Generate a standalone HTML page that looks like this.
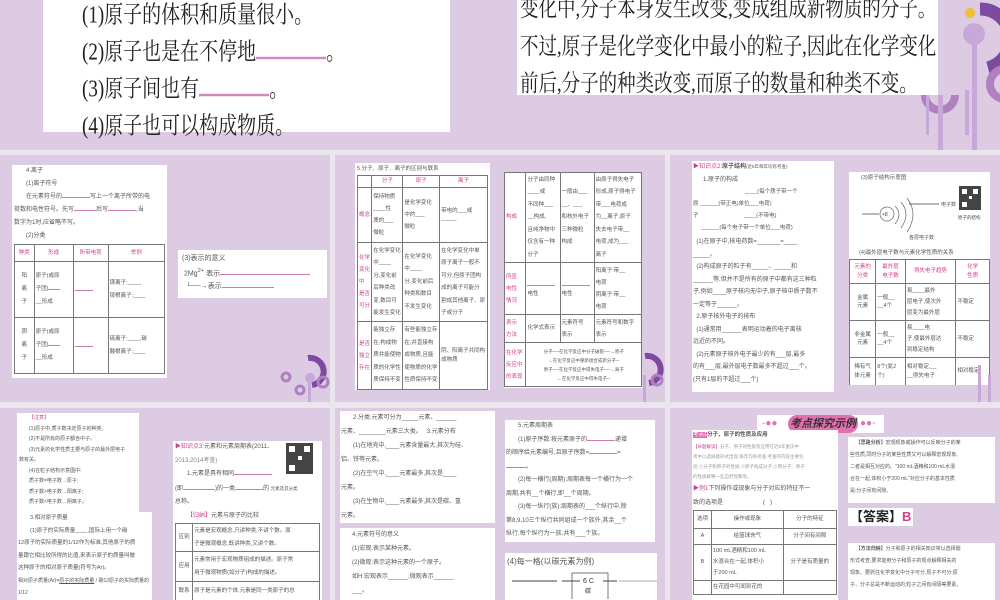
<!DOCTYPE html>
<html><head><meta charset="utf-8">
<style>
*{margin:0;padding:0;box-sizing:border-box}
body{width:1000px;height:600px;overflow:hidden;background:#ebe6ee;position:relative;font-family:"Liberation Sans","Noto Sans CJK SC",sans-serif;color:#333}
.s{position:absolute;background:#ddcbe3}
.p{position:absolute;background:#fff;overflow:hidden;font-size:6.5px;line-height:12px;color:#555;padding:2px 4px}
.big{position:absolute;font-family:"Liberation Serif","Noto Serif CJK SC",serif;font-size:19px;color:#222;white-space:nowrap;transform:scaleY(1.25);transform-origin:0 0}
.u{display:inline-block;border-bottom:1px solid #c77bb0;height:7px;vertical-align:baseline}
.bu{display:inline-block;border-bottom:2px solid #d08ac0;width:70px;height:18px}
table{border-collapse:collapse;width:100%}
td{border:1px solid #777;font-size:5.5px;line-height:8.5px;padding:0 1px;vertical-align:middle;color:#555}
.pk{color:#d0408f}
.deco{position:absolute}
</style></head><body>
<!-- top slide -->
<div class="s" style="left:0;top:0;width:1000px;height:150px"></div>
<div class="p" style="left:43px;top:0;width:407px;height:132px;padding:0"></div>
<div class="big" style="left:82px;top:-4px">(1)原子的体积和质量很小。</div>
<div class="big" style="left:82px;top:33px">(2)原子也是在不停地<span class="bu"></span>。</div>
<div class="big" style="left:82px;top:70px">(3)原子间也有<span class="bu"></span>。</div>
<div class="big" style="left:82px;top:107px">(4)原子也可以构成物质。</div>
<div class="p" style="left:517px;top:0;width:421px;height:95px;padding:0"></div>
<div class="big" style="left:520px;top:-9px;font-size:18.5px">变化中,分子本身发生改变,变成组成新物质的分子。</div>
<div class="big" style="left:520px;top:29px;font-size:18.5px">不过,原子是化学变化中最小的粒子,因此在化学变化</div>
<div class="big" style="left:520px;top:66px;font-size:18.5px">前后,分子的种类改变,而原子的数量和种类不变。</div>
<svg class="deco" style="left:860px;top:0" width="140" height="150">
<circle cx="110" cy="13" r="5" fill="#f0c030"/>
<path d="M120 9 A30 30 0 0 1 128 68" stroke="#7e4aa0" stroke-width="13" fill="none"/>
<circle cx="114" cy="34" r="11" fill="#c8a8d8"/>
<rect x="112" y="34" width="5" height="116" fill="#c8a8d8"/>
<rect x="105" y="90" width="4" height="45" fill="#c8a8d8"/>
<circle cx="145" cy="84" r="15" stroke="#b080c0" stroke-width="8" fill="none"/>
<rect x="142" y="84" width="4" height="56" fill="#c8a8d8"/>
<path d="M65 95 A15 15 0 0 0 95 95" stroke="#b080c0" stroke-width="8" fill="none"/>
<rect x="78" y="95" width="5" height="55" fill="#c8a8d8"/>
<rect x="66" y="95" width="3" height="40" fill="#c8a8d8"/>
</svg>

<!-- Row 2 -->
<div class="s" style="left:0;top:155px;width:330px;height:247px"></div>
<div class="s" style="left:335px;top:155px;width:330px;height:247px"></div>
<div class="s" style="left:670px;top:155px;width:330px;height:247px"></div>

<div class="p" style="left:12px;top:165px;width:155px;height:213px;padding:0 2px;font-size:6px;line-height:13px">
<div style="padding-left:12px">4.离子</div>
<div style="padding-left:12px">(1)离子符号</div>
<div style="padding-left:12px">在元素符号的<span class="u" style="width:28px"></span>写上一个离子所带的电</div>
<div>荷数和电性符号。先写<span class="u" style="width:22px"></span>后写<span class="u" style="width:28px"></span>,当</div>
<div>数字为1时,应省略不写。</div>
<div style="padding-left:12px">(2)分类</div>
<table style="margin-top:1px"><tr style="height:17px"><td class="pk" style="text-align:center">种类</td><td class="pk" style="text-align:center">形成</td><td class="pk" style="text-align:center">所带电荷</td><td class="pk" style="text-align:center">举例</td></tr>
<tr style="height:56px"><td style="line-height:13px;text-align:center">阳<br>离<br>子</td><td style="line-height:13px">原子(或原<br>子团)<span class="u" style="width:12px"></span><br>__形成</td><td><span class="u" style="width:18px"></span></td><td style="line-height:13px">镁离子:____,<br>铵根离子:____</td></tr>
<tr style="height:56px"><td style="line-height:13px;text-align:center">阴<br>离<br>子</td><td style="line-height:13px">原子(或原<br>子团)<span class="u" style="width:12px"></span><br>__形成</td><td><span class="u" style="width:18px"></span></td><td style="line-height:13px">硫离子:____,碳<br>酸根离子:____</td></tr></table>
</div>
<div class="p" style="left:178px;top:250px;width:149px;height:48px;font-size:7px;line-height:13px">(3)表示的意义<br>&nbsp;2Mg<sup>2+</sup> 表示<span class="u" style="width:90px"></span><br>&nbsp;&nbsp;└──→表示<span class="u" style="width:52px"></span></div>
<svg class="deco" style="left:278px;top:350px" width="52" height="52"><path d="M30 8 A12 12 0 0 1 34 35" stroke="#7e4aa0" stroke-width="6" fill="none"/><circle cx="32" cy="28" r="5" fill="#c8a8d8"/><rect x="30" y="28" width="3" height="24" fill="#c8a8d8"/><circle cx="45" cy="32" r="5" stroke="#b080c0" stroke-width="3" fill="none"/><circle cx="22" cy="40" r="4" stroke="#b080c0" stroke-width="3" fill="none"/><circle cx="8" cy="27" r="4" stroke="#b080c0" stroke-width="3" fill="none"/></svg>

<div class="p" style="left:355px;top:163px;width:135px;height:227px;padding:0 2px">
<div style="font-size:5.5px;line-height:12px">5.分子、原子、离子的区别与联系</div>
<table><tr style="height:12px"><td></td><td class="pk" style="text-align:center">分子</td><td class="pk" style="text-align:center">原子</td><td class="pk" style="text-align:center">离子</td></tr>
<tr style="height:55px"><td class="pk">概念</td><td style="line-height:12px">保持物质<br>____性<br>质的___<br>微粒</td><td style="line-height:12px">是化学变化<br>中的___<br>微粒</td><td>带电的___或<br>_____</td></tr>
<tr style="height:79px"><td class="pk" style="line-height:12px">化学<br>变化<br>中<br>是否<br>可分</td><td style="line-height:12.5px">在化学变化<br>中____<br>分,变化前<br>后种类改<br>变,数目可<br>能发生变化</td><td style="line-height:12.5px">在化学变化<br>中____<br>分,变化前后<br>种类和数目<br>不发生变化</td><td style="line-height:12.5px">在化学变化中单<br>原子离子一般不<br>可分,但原子团构<br>成的离子可能分<br>割成其他离子、原<br>子或分子</td></tr>
<tr style="height:68px"><td class="pk" style="line-height:12px">是否<br>独立<br>存在</td><td style="line-height:12.5px">能独立存<br>在,构成物<br>质并能使物<br>质的化学性<br>质保持不变</td><td style="line-height:12.5px">有些能独立存<br>在,并直接构<br>成物质,且能<br>使物质的化学<br>性质保持不变</td><td>阴、阳离子共同构<br>成物质</td></tr></table></div>
<div class="p" style="left:504px;top:172px;width:138px;height:216px;padding:0">
<table><tr style="height:90px"><td class="pk">构成</td><td style="line-height:12.5px">分子由同种<br>____或<br>不同种___<br>__构成,<br>且纯净物中<br>仅含有一种<br>分子</td><td style="line-height:12.5px">一般由___<br>__、___<br>和核外电子<br>三种微粒<br>构成</td><td style="line-height:12.5px">由原子得失电子<br>形成,原子得电子<br>带___电荷成<br>为__离子,原子<br>失去电子带__<br>电荷,成为___<br>离子</td></tr>
<tr style="height:52px"><td class="pk" style="line-height:12px">所显<br>电性<br>情况</td><td><span class="u" style="width:28px"></span><br>电性</td><td><span class="u" style="width:28px"></span><br>电性</td><td style="line-height:12px">阳离子:带__<br>电荷<br>阴离子:带__<br>电荷</td></tr>
<tr style="height:28px"><td class="pk" style="line-height:12px">表示<br>方法</td><td>化学式表示</td><td style="line-height:12px">元素符号<br>表示</td><td style="line-height:12px">元素符号和数字<br>表示</td></tr>
<tr style="height:44px"><td class="pk" style="line-height:12px">在化学<br>反应中<br>的表现</td><td colspan="3" style="font-size:4.5px;line-height:9px;text-align:center">分子──在化学反应中分子破裂──→原子<br>←在化学反应中重新组合成新分子─<br>原子──在化学反应中得失电子──→离子<br>←在化学反应中得失电子─</td></tr></table></div>

<div class="p" style="left:692px;top:161px;width:142px;height:231px;padding:0 1px;font-size:6px;line-height:12.5px">
<div><span class="pk">▶知识点2:</span><b>原子结构</b><span style="font-size:4.5px">(近5年每年均有考查)</span></div>
<div style="padding-left:10px">1.原子的构成</div>
<div style="height:50px;font-size:5.5px;line-height:12px;position:relative">
<div style="position:absolute;left:52px;top:0">____(每个质子带一个</div>
<div style="position:absolute;left:0;top:12px">原 ______(带正电)单位___电荷)</div>
<div style="position:absolute;left:0;top:24px">子 <span style="padding-left:44px">____(不带电)</span></div>
<div style="position:absolute;left:8px;top:36px">______(每个电子带一个单位___电荷)</div></div>
<div>&nbsp;&nbsp;(1)在原子中,核电荷数=_______=____</div>
<div>_____。</div>
<div>&nbsp;&nbsp;(2)构成原子的粒子有_____、_____和</div>
<div>______等,但并不是所有的原子中都有这三种粒</div>
<div>子,例如____原子核内无中子,原子核中质子数不</div>
<div>一定等于______。</div>
<div>&nbsp;&nbsp;2.原子核外电子的排布</div>
<div>&nbsp;&nbsp;(1)通常用______表明运动着的电子离核</div>
<div>远近的不同。</div>
<div>&nbsp;&nbsp;(2)元素原子核外电子最少的有___层,最多</div>
<div>的有___层,最外层电子数最多不超过___个。</div>
<div>(只有1层的不超过___个)</div></div>
<div class="p" style="left:849px;top:172px;width:141px;height:213px;padding:0">
<div style="padding-left:12px;font-size:5.5px">(3)原子结构示意图</div>
<svg width="141" height="58"><circle cx="38" cy="30" r="7" fill="none" stroke="#666" stroke-width="0.7"/><text x="33" y="32" font-size="5" fill="#444">+8</text><path d="M46 22 Q54 30 46 40 M52 18 Q62 30 52 44 M58 14 Q70 30 58 48" stroke="#666" fill="none" stroke-width="0.7"/><line x1="13" y1="30" x2="30" y2="30" stroke="#444" stroke-width="0.7"/><line x1="60" y1="20" x2="90" y2="20" stroke="#444" stroke-width="0.7"/><text x="92" y="22" font-size="5" fill="#555">电子数</text><text x="60" y="55" font-size="5" fill="#555">各层电子数</text><rect x="110" y="2" width="22" height="24" fill="#444"/><rect x="113" y="5" width="5" height="5" fill="#fff"/><rect x="124" y="5" width="5" height="5" fill="#fff"/><rect x="113" y="18" width="5" height="5" fill="#fff"/><rect x="120" y="12" width="3" height="3" fill="#fff"/><text x="109" y="35" font-size="4.5" fill="#444">原子的结构</text></svg>
<div style="padding-left:10px;font-size:5.5px">(4)最外层电子数与元素化学性质的关系</div>
<table><tr style="height:24px"><td class="pk" style="text-align:center">元素的<br>分类</td><td class="pk" style="text-align:center">最外层<br>电子数</td><td class="pk" style="text-align:center">得失电子趋势</td><td class="pk" style="text-align:center">化学<br>性质</td></tr>
<tr style="height:37px"><td style="text-align:center">金属<br>元素</td><td>一般__<br>__4个</td><td style="line-height:11px">易____最外<br>层电子,使次外<br>层变为最外层</td><td>不稳定</td></tr>
<tr style="height:37px"><td style="text-align:center">非金属<br>元素</td><td>一般__<br>__4个</td><td style="line-height:11px">易____电<br>子,使最外层达<br>到稳定结构</td><td>不稳定</td></tr>
<tr style="height:28px"><td style="text-align:center">稀有气<br>体元素</td><td>8个(氦2<br>个)</td><td>相对稳定,__<br>__得失电子</td><td>相对稳定</td></tr></table></div>
<svg class="deco" style="left:635px;top:350px" width="30" height="52"><path d="M10 6 A12 12 0 0 1 14 33" stroke="#7e4aa0" stroke-width="6" fill="none"/><rect x="8" y="25" width="3" height="27" fill="#c8a8d8"/><circle cx="22" cy="30" r="5" stroke="#b080c0" stroke-width="3" fill="none"/></svg>
<svg class="deco" style="left:960px;top:360px" width="40" height="42"><rect x="18" y="5" width="3" height="37" fill="#c8a8d8"/><rect x="28" y="15" width="3" height="27" fill="#c8a8d8"/></svg>

<!-- Row 3 -->
<div class="s" style="left:0;top:408px;width:330px;height:192px"></div>
<div class="s" style="left:335px;top:408px;width:330px;height:192px"></div>
<div class="s" style="left:670px;top:408px;width:330px;height:192px"></div>

<div class="p" style="left:17px;top:413px;width:122px;height:104px;font-size:5px;line-height:10.5px;padding:0 0 0 2px">
<div class="pk" style="padding-left:10px">【注意】</div>
<div style="padding-left:10px">(1)原子中,质子数决定原子的种类。</div>
<div style="padding-left:10px">(2)不是所有的原子都含中子。</div>
<div style="padding-left:10px">(3)元素的化学性质主要与原子的最外层电子</div>
<div>数有关。</div>
<div style="padding-left:10px">(4)在粒子结构示意图中:</div>
<div style="padding-left:10px">质子数=电子数→原子;</div>
<div style="padding-left:10px">质子数&gt;电子数→阳离子;</div>
<div style="padding-left:10px">质子数&lt;电子数→阴离子。</div></div>
<div class="p" style="left:17px;top:512px;width:135px;height:88px;font-size:5.5px;line-height:12.5px;padding:0 0 0 1px">
<div style="padding-left:12px">3.相对原子质量</div>
<div style="padding-left:12px">(1)原子的实际质量____,国际上用一个碳</div>
<div>12原子的实际质量的1/12作为标准,其他原子的质</div>
<div>量跟它相比较所得的比值,来表示原子的质量叫做</div>
<div>这种原子的相对原子质量(符号为Ar)。</div>
<div style="font-size:5px">相对原子质量(Ar)=<u>原子的实际质量</u> / 碳12原子的实际质量的1/12</div></div>
<div class="p" style="left:173px;top:441px;width:149px;height:159px;padding:0 2px;font-size:6px;line-height:13.5px">
<div><span class="pk">▶知识点3:</span>元素和元素周期表(2011、</div>
<div style="color:#888">2013,2014考查)</div>
<div style="padding-left:12px">1.元素是具有相同<span class="u" style="width:38px"></span></div>
<div>(即<span class="u" style="width:32px"></span>)的一类<span class="u" style="width:28px"></span>的 <span style="font-size:4.5px">元素及其分类</span></div>
<div>总称。</div>
<div style="padding-left:12px"><span class="pk">【归纳】</span>元素与原子的比较</div>
<table><tr style="height:28px"><td style="text-align:center">区别</td><td style="line-height:13px">元素是宏观概念,只讲种类,不讲个数。原<br>子是微观概念,既讲种类,又讲个数。</td></tr>
<tr style="height:30px"><td style="text-align:center">应用</td><td style="line-height:13px">元素常用于宏观物质组成的描述。原子常<br>用于微观物质(如分子)构成的描述。</td></tr>
<tr style="height:20px"><td style="text-align:center">联系</td><td>原子是元素的个体,元素是同一类原子的总</td></tr></table>
<svg style="position:absolute;left:113px;top:2px" width="28" height="32"><rect width="27" height="31" fill="#444"/><rect x="3" y="3" width="6" height="6" fill="#fff"/><rect x="18" y="3" width="6" height="6" fill="#fff"/><rect x="3" y="22" width="6" height="6" fill="#fff"/><rect x="12" y="13" width="4" height="4" fill="#fff"/></svg></div>

<div class="p" style="left:340px;top:411px;width:155px;height:112px;font-size:6px;line-height:14px;padding:0 0 0 1px">
<div style="padding-left:12px">2.分类:元素可分为_____元素、______</div>
<div>元素、________元素三大类。&nbsp;&nbsp;&nbsp;3.元素分布</div>
<div style="padding-left:12px">(1)在地壳中,____元素含量最大,其次为硅、</div>
<div>铝、铁等元素。</div>
<div style="padding-left:12px">(2)在空气中,____元素最多,其次是____</div>
<div>元素。</div>
<div style="padding-left:12px">(3)在生物中,____元素最多,其次是碳、氢</div>
<div>元素。</div></div>
<div class="p" style="left:340px;top:528px;width:155px;height:72px;font-size:6px;line-height:14px;padding:0 0 0 12px">
<div>4.元素符号的意义</div>
<div>(1)宏观:表示某种元素。</div>
<div>(2)微观:表示这种元素的一个原子。</div>
<div>如H:宏观表示______;微观表示______</div>
<div>___。</div></div>
<div class="p" style="left:505px;top:420px;width:150px;height:122px;font-size:6px;line-height:13.5px;padding:0 0 0 1px">
<div style="padding-left:12px">5.元素周期表</div>
<div style="padding-left:12px">(1)原子序数:按元素原子的<span class="u" style="width:28px"></span>递增</div>
<div>的顺序给元素编号,且原子序数=<span class="u" style="width:28px"></span>=</div>
<div><span class="u" style="width:20px"></span>。</div>
<div style="padding-left:12px">(2)每一横行(周期):周期表每一个横行为一个</div>
<div>周期,共有__个横行,即__个周期。</div>
<div style="padding-left:12px">(3)每一纵行(族):周期表的___个纵行中,除</div>
<div>第8,9,10三个纵行共同组成一个族外,其余__个</div>
<div>纵行,每个纵行为一族,共有___个族。</div></div>
<div class="p" style="left:505px;top:553px;width:152px;height:47px;font-size:8px;line-height:14px;padding:2px 2px">
<div>(4)每一格(以碳元素为例)</div>
<svg width="150" height="30"><rect x="65" y="4" width="36" height="30" fill="none" stroke="#555" stroke-width="0.8"/><text x="76" y="14" font-size="7" fill="#333">6 C</text><text x="78" y="24" font-size="6" fill="#333">碳</text><line x1="5" y1="12" x2="50" y2="12" stroke="#444"/><line x1="55" y1="12" x2="73" y2="12" stroke="#444"/><line x1="96" y1="12" x2="110" y2="12" stroke="#444"/><line x1="112" y1="12" x2="150" y2="12" stroke="#aaa"/></svg></div>

<div style="position:absolute;left:757px;top:415px;width:127px;height:18px;background:#fff"></div>
<div style="position:absolute;left:788px;top:415px;width:70px;height:18px;background:#e070b0;border-radius:9px;color:#333;font-size:11px;font-style:italic;font-weight:bold;text-align:center;line-height:18px">考点探究示例</div>
<div style="position:absolute;left:762px;top:419px;color:#e070b0;font-size:10px;line-height:10px">-●●</div>
<div style="position:absolute;left:860px;top:419px;color:#e070b0;font-size:10px;line-height:10px">●●-</div>
<div class="p" style="left:692px;top:430px;width:146px;height:170px;padding:0 1px;font-size:5.5px;line-height:11.5px">
<div><span style="background:#e070b0;color:#fff">考点1</span><b>分子、原子的性质及应用</b></div>
<div style="font-size:4.5px;line-height:10px;color:#999"><span class="pk">【命题解读】</span>分子、原子的性质及应用在近5年重庆中<br>考中以选择题形式出现,每年均有考查,考查的内容主要包<br>括:①分子和原子的性质;②原子构成分子;③用分子、原子<br>的性质解释一些自然现象等。</div>
<div style="font-size:6px;line-height:14px"><span class="pk">▶例1</span>下列操作或现象与分子对应的特征不一</div>
<div style="font-size:6px;line-height:14px">致的选项是&nbsp;&nbsp;&nbsp;&nbsp;&nbsp;&nbsp;&nbsp;&nbsp;&nbsp;&nbsp;&nbsp;&nbsp;&nbsp;&nbsp;&nbsp;&nbsp;&nbsp;&nbsp;&nbsp;&nbsp;&nbsp;&nbsp;&nbsp;&nbsp;(&nbsp;&nbsp;&nbsp;)</div>
<table><tr style="height:18px"><td style="text-align:center">选项</td><td style="text-align:center">操作或现象</td><td style="text-align:center">分子的特征</td></tr>
<tr style="height:16px"><td style="text-align:center">A</td><td style="text-align:center">给篮球充气</td><td style="text-align:center">分子间有间隙</td></tr>
<tr style="height:36px"><td style="text-align:center">B</td><td style="line-height:11px">100 mL酒精和100 mL<br>水混合在一起,体积小<br>于200 mL</td><td style="text-align:center">分子是有质量的</td></tr>
<tr style="height:14px"><td></td><td>在花园中可闻到花的</td><td></td></tr></table></div>
<div class="p" style="left:848px;top:437px;width:147px;height:66px;font-size:5px;line-height:12px;padding:0 2px">
<div>&nbsp;&nbsp;&nbsp;&nbsp;<b>【思路分析】</b>宏观现象或操作可以反映分子的某</div>
<div>些性质,同时分子的某些性质又可以解释宏观现象,</div>
<div>二者是相互对应的。"100 mL酒精和100 mL水混</div>
<div>合在一起,体积小于200 mL"对应分子的基本性质</div>
<div>是:分子间有间隙。</div></div>
<div style="position:absolute;left:848px;top:508px;font-size:13px;line-height:18px;color:#222;font-weight:bold;background:#fff;padding:0 2px">【答案】<span style="color:#d0408f">B</span></div>
<div class="p" style="left:848px;top:543px;width:147px;height:57px;font-size:5px;line-height:12px;padding:0 2px">
<div>&nbsp;&nbsp;&nbsp;&nbsp;<b>【方法归纳】</b>分子和原子的相关知识常以选择题</div>
<div>形式考查,要求能用分子和原子的观点解释相关的</div>
<div>现象。要抓住化学变化中分子可分,原子不可分;原</div>
<div>子、分子总是不断运动的;粒子之间有间隔等要素。</div></div>
</body></html>
